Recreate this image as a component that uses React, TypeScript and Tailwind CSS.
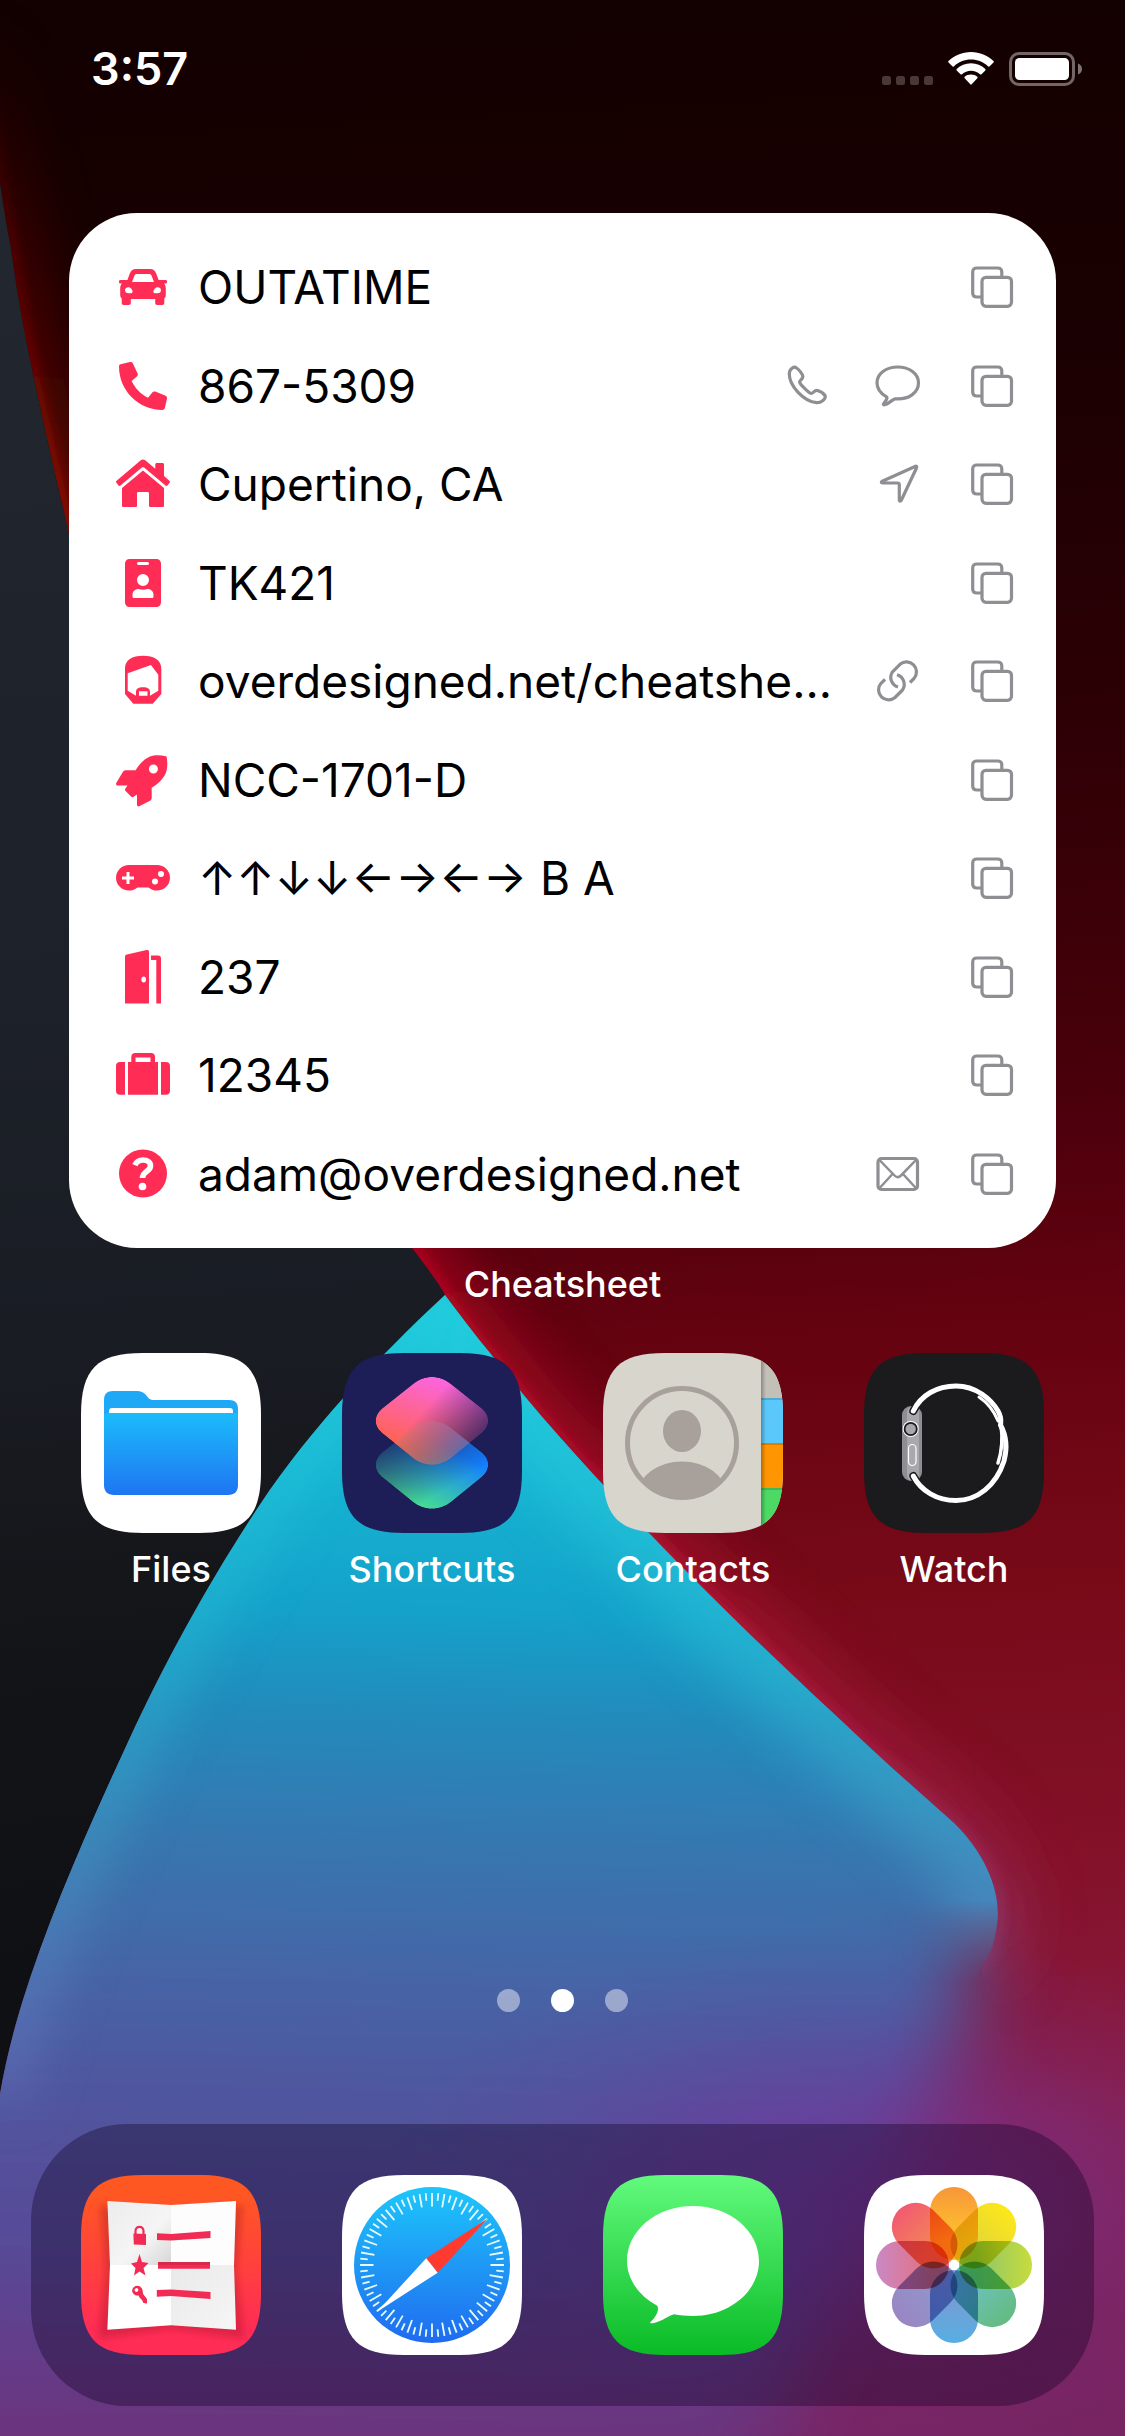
import type { ReactNode } from "react";

/* ---------- Wallpaper ---------- */

const BLUE_LEFT =
  "M445 1295C375 1360 310 1430 261 1503C215 1572 168 1655 129 1740C85 1835 48 1920 22 2003C12 2036 5 2065 0 2094";
const BLUE_RIGHT =
  "C460 1315 475 1335 490 1353C545 1424 600 1482 649 1533C740 1628 830 1710 890 1766L954 1823C990 1858 1003 1900 996 1930C994 1945 990 1955 980 1968";
const RED_EDGE =
  "M-20 20C-10 110 -2 180 11 249C22 330 38 400 69 534C130 770 240 1010 412 1248C425 1265 440 1285 445 1295";

function Wallpaper() {
  return (
    <svg
      className="absolute inset-0 h-full w-full"
      viewBox="0 0 1125 2436"
      preserveAspectRatio="xMidYMid slice"
      aria-hidden="true"
    >
      <defs>
        <linearGradient id="wRed" gradientUnits="userSpaceOnUse" x1="500" y1="0" x2="640" y2="2436">
          <stop offset="0" stopColor="#130000" />
          <stop offset="0.15" stopColor="#1a0002" />
          <stop offset="0.3" stopColor="#2c0005" />
          <stop offset="0.46" stopColor="#4a000b" />
          <stop offset="0.55" stopColor="#640210" />
          <stop offset="0.66" stopColor="#780a18" />
          <stop offset="0.78" stopColor="#84122a" />
          <stop offset="0.88" stopColor="#8a1c48" />
          <stop offset="1" stopColor="#7c2058" />
        </linearGradient>
        <linearGradient id="wDark" gradientUnits="userSpaceOnUse" x1="0" y1="300" x2="120" y2="2000">
          <stop offset="0" stopColor="#21262f" />
          <stop offset="0.4" stopColor="#1d2129" />
          <stop offset="0.62" stopColor="#191c23" />
          <stop offset="0.8" stopColor="#131417" />
          <stop offset="1" stopColor="#0f1013" />
        </linearGradient>
        <linearGradient id="wBlue" gradientUnits="userSpaceOnUse" x1="500" y1="1290" x2="470" y2="2436">
          <stop offset="0" stopColor="#20c6d8" />
          <stop offset="0.16" stopColor="#16b4d2" />
          <stop offset="0.28" stopColor="#14a2ca" />
          <stop offset="0.37" stopColor="#228bbc" />
          <stop offset="0.48" stopColor="#3677b0" />
          <stop offset="0.58" stopColor="#4468a8" />
          <stop offset="0.68" stopColor="#4d59a0" />
          <stop offset="0.78" stopColor="#554f9a" />
          <stop offset="0.9" stopColor="#5a4694" />
          <stop offset="1" stopColor="#63408c" />
        </linearGradient>
        <radialGradient id="wPurple">
          <stop offset="0" stopColor="#753499" stopOpacity="0.8" />
          <stop offset="0.35" stopColor="#73359a" stopOpacity="0.55" />
          <stop offset="0.7" stopColor="#6f379a" stopOpacity="0.18" />
          <stop offset="1" stopColor="#6b3a98" stopOpacity="0" />
        </radialGradient>
        <linearGradient id="wFadeY" gradientUnits="userSpaceOnUse" x1="0" y1="1900" x2="0" y2="1985">
          <stop offset="0" stopColor="#fff" />
          <stop offset="1" stopColor="#000" />
        </linearGradient>
        <linearGradient id="wEdge" gradientUnits="userSpaceOnUse" x1="0" y1="1300" x2="0" y2="2050">
          <stop offset="0" stopColor="#24d6e2" />
          <stop offset="0.5" stopColor="#2fc0d6" />
          <stop offset="0.75" stopColor="#48a4cc" />
          <stop offset="1" stopColor="#6a80c8" />
        </linearGradient>
        <linearGradient id="wGlow" gradientUnits="userSpaceOnUse" x1="0" y1="20" x2="0" y2="1960">
          <stop offset="0" stopColor="#5a0000" stopOpacity="0" />
          <stop offset="0.12" stopColor="#7a0400" stopOpacity="0.7" />
          <stop offset="0.25" stopColor="#a80c00" />
          <stop offset="0.6" stopColor="#c80020" />
          <stop offset="0.8" stopColor="#b81838" />
          <stop offset="1" stopColor="#a02858" />
        </linearGradient>
        <linearGradient id="wBottom" gradientUnits="userSpaceOnUse" x1="0" y1="2250" x2="0" y2="2436">
          <stop offset="0" stopColor="#702a7c" stopOpacity="0" />
          <stop offset="1" stopColor="#74286c" stopOpacity="0.5" />
        </linearGradient>
        <filter id="wB6" filterUnits="userSpaceOnUse" x="-200" y="-200" width="1525" height="2836">
          <feGaussianBlur stdDeviation="6" />
        </filter>
        <filter id="wB28" filterUnits="userSpaceOnUse" x="-200" y="-200" width="1525" height="2836">
          <feGaussianBlur stdDeviation="28" />
        </filter>
        <filter id="wB40" filterUnits="userSpaceOnUse" x="-400" y="1200" width="1725" height="1636">
          <feGaussianBlur stdDeviation="40" />
        </filter>
        <clipPath id="wRightOfLeft">
          <path d={BLUE_LEFT + "V2436H1125V1295Z"} />
        </clipPath>
        <clipPath id="wBlueClip">
          <path d={"M0 2094C5 2065 12 2036 22 2003C48 1920 85 1835 129 1740C168 1655 215 1572 261 1503C310 1430 375 1360 445 1295" + BLUE_RIGHT + "L900 2436H0Z"} />
        </clipPath>
        <clipPath id="wRedClip">
          <path d={RED_EDGE + BLUE_RIGHT + "L1125 2436V0H-20Z"} />
        </clipPath>
        <mask id="wSharp" maskUnits="userSpaceOnUse" x="0" y="1200" width="1125" height="1236">
          <rect y="1200" width="1125" height="1236" fill="url(#wFadeY)" />
        </mask>
      </defs>

      <rect width="1125" height="2436" fill="url(#wRed)" />
      <g clipPath="url(#wRedClip)">
        <path d={RED_EDGE + BLUE_RIGHT} fill="none" stroke="url(#wGlow)" strokeWidth="60" opacity="0.6" filter="url(#wB28)" />
        <path d={RED_EDGE + BLUE_RIGHT} fill="none" stroke="url(#wGlow)" strokeWidth="12" opacity="0.7" filter="url(#wB6)" />
      </g>
      <path d={RED_EDGE + "C375 1360 310 1430 261 1503C215 1572 168 1655 129 1740C85 1835 48 1920 22 2003C12 2036 5 2065 0 2094H-30V20Z"} fill="url(#wDark)" />

      <g clipPath="url(#wRightOfLeft)">
        <path
          d="M-200 1720H680L850 1830L950 1890C990 1960 975 2030 920 2120C860 2220 790 2330 740 2600H-200Z"
          fill="url(#wBlue)"
          filter="url(#wB40)"
        />
      </g>
      <g mask="url(#wSharp)">
        <g clipPath="url(#wBlueClip)">
          <rect y="1200" width="1125" height="1236" fill="url(#wBlue)" />
          <path d={"M445 1295" + BLUE_RIGHT} fill="none" stroke="url(#wEdge)" strokeWidth="90" opacity="0.55" filter="url(#wB28)" />
        </g>
      </g>
      <g clipPath="url(#wBlueClip)">
        <path d={BLUE_LEFT} fill="none" stroke="url(#wEdge)" strokeWidth="46" opacity="0.55" filter="url(#wB28)" />
      </g>
      <ellipse cx="860" cy="2200" rx="480" ry="270" fill="url(#wPurple)" />
      <rect y="2250" width="1125" height="186" fill="url(#wBottom)" />
    </svg>
  );
}

/* ---------- Row glyphs (54 × 54) ---------- */

const glyphs: Record<string, ReactNode> = {
  car: (
    <path
      fillRule="evenodd"
      d="M20 9H34C37.5 9 39.2 11 40.2 13.6L42.6 20H49.5C50.5 20 51 20.6 51 21.5V22C51 23 50.3 23.6 49.5 23.6H48C49.3 25 49.8 26.5 49.8 28.5V35C49.8 36.4 49.3 37.6 48.3 38.4V43C48.3 44.2 47.5 45 46.3 45H41.2C40 45 39.2 44.2 39.2 43V39H14.8V43C14.8 44.2 14 45 12.8 45H7.7C6.5 45 5.7 44.2 5.7 43V38.4C4.7 37.6 4.2 36.4 4.2 35V28.5C4.2 26.5 4.7 25 6 23.6H4.5C3.7 23.6 3 23 3 22V21.5C3 20.6 3.5 20 4.5 20H11.4L13.8 13.6C14.8 11 16.5 9 20 9ZM21 14C19.6 14 18.8 14.6 18.3 15.9L16 22H38L35.7 15.9C35.2 14.6 34.4 14 33 14ZM12.5 27.3C10.4 27.3 9 28.5 9 30.3C9 32.1 10.4 33.3 12.5 33.3C14.6 33.3 16.6 33.6 16.6 31.8C16.6 30 14.6 27.3 12.5 27.3ZM41.5 27.3C39.4 27.3 37.4 30 37.4 31.8C37.4 33.6 39.4 33.3 41.5 33.3C43.6 33.3 45 32.1 45 30.3C45 28.5 43.6 27.3 41.5 27.3Z"
    />
  ),
  phone: (
    <path d="M4.6 5.2L14 3C15.2 2.7 16.4 3.3 16.9 4.4L21.6 14.6C22 15.6 21.7 16.8 20.9 17.5L15.6 22C19 29 24.5 35 32 38.8L36.5 33.3C37.2 32.5 38.3 32.2 39.3 32.6L49.6 36.8C50.7 37.3 51.3 38.5 51 39.7L48.8 49C48.5 50.2 47.5 51 46.3 51C22.500 51 3 31.500 3 7.500C3 6.400 3.500 5.500 4.600 5.200Z" />
  ),
  home: (
    <>
      <path d="M24.800 3.300C26.100 2.200 27.900 2.200 29.200 3.300L39.300 11.800V7.500C39.300 6.600 39.900 6 40.800 6H46.500C47.400 6 48 6.600 48 7.500V19.100L53.400 23.700C54.100 24.300 54.200 25.100 53.600 25.800L51.700 28.300C51.100 29 50.200 29.100 49.500 28.500L28.100 10.600C27.400 10.100 26.600 10.100 25.900 10.600L4.500 28.500C3.800 29.100 2.900 29 2.300 28.300L.400 25.800C-.200 25.100-.100 24.300.600 23.700Z" />
      <path d="M27 13.500L48 31V48.500C48 49.500 47.500 50 46.500 50H34.500C33.500 50 33 49.500 33 48.500V36.500C33 35.500 32.500 35 31.500 35H22.500C21.500 35 21 35.500 21 36.500V48.500C21 49.500 20.500 50 19.500 50H7.500C6.500 50 6 49.500 6 48.500V31Z" />
    </>
  ),
  badge: (
    <path
      fillRule="evenodd"
      d="M13.500 3H40.500C43 3 45 5 45 7.500V46.500C45 49 43 51 40.500 51H13.500C11 51 9 49 9 46.500V7.500C9 5 11 3 13.500 3ZM22.500 6C20.500 6 20.500 9 22.500 9H31.500C33.500 9 33.500 6 31.500 6ZM27 18A6 6 0 1 0 27 30A6 6 0 1 0 27 18ZM22.500 33C19 33 16.500 35.500 16.500 39V40.500C16.500 41.500 17.200 42 18.500 42H35.500C36.800 42 37.500 41.500 37.500 40.500V39C37.500 35.500 35 33 31.500 33C29 34 25 34 22.500 33Z"
    />
  ),
  face: (
    <path
      fillRule="evenodd"
      d="M27 1.700C38 1.700 45.300 6 45.300 14.500V40L36.700 49.700H17.300L9 40V14.500C9 6 16 1.700 27 1.700ZM35 11L11.700 19.300V36.700L20 41.700V38C20 35 22 33.300 27 33.300C32 33.300 34 35 34 38V41.700L42.300 36.700V20.700ZM23 37.300V41.700H31.500V37.300Z"
    />
  ),
  rocket: (
    <path
      fillRule="evenodd"
      d="M49.800 3.200C44.500 1.900 38.500 1.800 34 3.500C28 6 23.500 11 19.600 17.300H10C8.500 17.300 7.500 17.800 6.800 19L.400 29.800C-.400 31.200.400 32.500 2 32.500H11.500L9.400 35.500C8.800 36.500 8.900 37.300 9.600 38.100L15 43.500C15.800 44.300 16.700 44.400 17.600 43.700L21 41.500V51.500C21 53.200 22.300 53.800 23.700 53.100L34 47.800C35.200 47.100 35.700 46.200 35.700 44.700V34.800C42 31 47.200 26 49.800 20C51.500 15.500 51.700 9.500 50.700 4.200C50.600 3.600 50.300 3.300 49.800 3.200ZM37.400 11.500A4.500 4.500 0 1 1 37.400 20.500A4.500 4.500 0 1 1 37.400 11.500Z"
    />
  ),
  gamepad: (
    <path
      fillRule="evenodd"
      d="M13 14H41A13 12.800 0 0 1 41 39.600C37.500 39.600 35 38.500 32.500 36.500H21.500C19 38.500 16.500 39.600 13 39.600A13 12.800 0 0 1 13 14ZM10.500 21V25.500H6V28.500H10.500V33H13.500V28.500H18V25.500H13.500V21ZM45 20A3 3 0 1 0 45 26A3 3 0 1 0 45 20ZM39 27.500A3 3 0 1 0 39 33.500A3 3 0 1 0 39 27.500Z"
    />
  ),
  door: (
    <path
      fillRule="evenodd"
      d="M11 4.500L30.500 0C32 -.300 33 .500 33 2V53.500H9V7C9 5.500 9.600 4.800 11 4.500ZM27.700 26.500A2.300 3 0 1 0 27.700 32.500A2.300 3 0 1 0 27.700 26.500ZM35 5.500H42C44 5.500 45 6.500 45 8.500V53.500H40.300V10H35Z"
    />
  ),
  suitcase: (
    <path
      fillRule="evenodd"
      d="M4 14H9V46.700H4C1.500 46.700 0 45.200 0 42.700V18C0 15.500 1.500 14 4 14ZM45 14H50C52.500 14 54 15.500 54 18V42.700C54 45.200 52.500 46.700 50 46.700H45ZM12 14H15.300V9C15.300 6.500 16.800 5 19.300 5H35C37.500 5 39 6.500 39 9V14H42V46.700H12ZM19.500 9.500V14H34.500V9.500Z"
    />
  ),
  question: (
    <>
      <circle cx="27" cy="26.500" r="24" />
      <path d="M18.800 18.200C20.500 14.500 23.200 13 27 13C31.500 13 34.500 15.600 34.500 19C34.500 24.500 26.500 24 26.500 31" fill="none" stroke="#fff" strokeWidth="5.600" />
      <circle cx="26.500" cy="39.500" r="3.800" fill="#fff" />
    </>
  ),
};

function RowGlyph({ name }: { name: string }) {
  return (
    <svg className="size-[54px] shrink-0 fill-[#ff2d55]" viewBox="0 0 54 54" aria-hidden="true">
      {glyphs[name]}
    </svg>
  );
}

/* ---------- Action glyphs (44 × 44) ---------- */

const actionGlyphs: Record<string, ReactNode> = {
  copy: (
    <>
      <path d="M11 32H7C4.200 32 2.700 30.500 2.700 28V7C2.700 4.500 4.200 3 7 3H27.500C30.300 3 31.800 4.500 31.800 7V11" />
      <rect x="12" y="12.300" width="29.500" height="29" rx="4" />
    </>
  ),
  call: (
    <path d="M14.500 4C12 1.800 7.500 5 7.300 9.500C7 22 22 37.500 34.500 38.700C39 39 44.500 35 43 31.500C42 30 38 27.300 35.500 26.500C32.500 25.800 31 29.800 29 29.500C27 29.200 17.800 20.200 17.600 18C17.500 16.500 21 14.800 20.900 12.500C20.500 10 17 5.500 14.500 4Z" />
  ),
  message: (
    <path d="M21.700 3C10 3 1 9.800 1 18.800C1 25 5 29.800 10.500 32.800C12 33.800 9.500 37.500 7.500 40C7 41 8 41 9.500 40.500C14 38.800 17 35 19 34.800C33 36 42.500 28.500 42.500 18.800C42.500 9.800 33.500 3 21.700 3Z" />
  ),
  navigate: <path d="M39 4.500L6.300 19.200C5 20 5 21 6.500 21H21.500C22.800 21 23.300 21.500 23.300 22.800V38C23.300 39.500 24.600 39.500 25.300 38.200L40.500 6C41.200 4.500 40.500 3.800 39 4.500Z" />,
  link: (
    <>
      <path d="M34 23.500L38 19.500A10 10 0 0 0 24 5.300L16.500 12.800A10 10 0 0 0 22 28" />
      <path d="M34 23.500L38 19.500A10 10 0 0 0 24 5.300L16.500 12.800A10 10 0 0 0 22 28" transform="rotate(180 21.500 21.900)" />
    </>
  ),
  mail: (
    <>
      <rect x="2" y="6.500" width="39.500" height="31" rx="3.500" />
      <path d="M3 7.500L18.500 23.500C20.500 25.500 23 25.500 25 23.500L40.500 7.500M3.200 36.500L16.500 22M40.300 36.500L27 22" strokeWidth="2.500" />
    </>
  ),
};

function ActionGlyph({ name }: { name: string }) {
  return (
    <svg
      className="size-[44px] overflow-visible fill-none stroke-[#8e8e93]"
      viewBox="0 0 44 44"
      strokeWidth="3.200"
      strokeLinejoin="round"
      aria-hidden="true"
    >
      {actionGlyphs[name]}
    </svg>
  );
}

/* ---------- Cheatsheet widget ---------- */

type Row = { icon: string; text: string; links?: { glyph: string; label: string; href: string }[] };

const rows: Row[] = [
  { icon: "car", text: "OUTATIME" },
  {
    icon: "phone",
    text: "867-5309",
    links: [
      { glyph: "call", label: "Call 867-5309", href: "tel:8675309" },
      { glyph: "message", label: "Message 867-5309", href: "sms:8675309" },
    ],
  },
  { icon: "home", text: "Cupertino, CA", links: [{ glyph: "navigate", label: "Open in Maps", href: "#maps" }] },
  { icon: "badge", text: "TK421" },
  {
    icon: "face",
    text: "overdesigned.net/cheatshe...",
    links: [{ glyph: "link", label: "Open link", href: "#link" }],
  },
  { icon: "rocket", text: "NCC-1701-D" },
  { icon: "gamepad", text: "↑↑↓↓←→←→ B A" },
  { icon: "door", text: "237" },
  { icon: "suitcase", text: "12345" },
  {
    icon: "question",
    text: "adam@overdesigned.net",
    links: [{ glyph: "mail", label: "Send mail", href: "mailto:adam@overdesigned.net" }],
  },
];

function Widget() {
  return (
    <section aria-label="Cheatsheet" className="mx-[69px] mt-[75px]">
      <ul className="grid min-h-[1035px] auto-rows-fr grid-cols-1 rounded-[68px] bg-white py-[25px] pr-[42px] pl-[47px]">
        {rows.map((row) => (
          <li key={row.text} className="flex min-w-0 items-center gap-7">
            <RowGlyph name={row.icon} />
            <span className="min-w-0 flex-1 truncate text-[46px] leading-[60px] text-black">{row.text}</span>
            <div className="flex shrink-0 items-center gap-[50px]">
              {row.links?.map((l) => (
                <a key={l.glyph} href={l.href} aria-label={l.label}>
                  <ActionGlyph name={l.glyph} />
                </a>
              ))}
              <button type="button" aria-label={`Copy ${row.text}`}>
                <ActionGlyph name="copy" />
              </button>
            </div>
          </li>
        ))}
      </ul>
      <p className="mt-[14px] text-center text-[36px] leading-[44px] font-medium text-white">Cheatsheet</p>
    </section>
  );
}

/* ---------- App icons (180 × 180) ---------- */

const SQUIRCLE =
  "M0 62C0 16 16 0 62 0H118C164 0 180 16 180 62V118C180 164 164 180 118 180H62C16 180 0 164 0 118Z";

function IconBase({ id, children }: { id: string; children: ReactNode }) {
  return (
    <svg className="size-[180px]" viewBox="0 0 180 180" aria-hidden="true">
      <defs>
        <clipPath id={`${id}-clip`}>
          <path d={SQUIRCLE} />
        </clipPath>
      </defs>
      <g clipPath={`url(#${id}-clip)`}>{children}</g>
    </svg>
  );
}

function FilesIcon() {
  return (
    <IconBase id="files">
      <defs>
        <linearGradient id="fFront" x1="0" y1="0" x2="0" y2="1">
          <stop offset="0" stopColor="#1bbcfb" />
          <stop offset="1" stopColor="#1f75f2" />
        </linearGradient>
      </defs>
      <rect width="180" height="180" fill="#fff" />
      <path d="M23 47C23 41 26 38 32 38H56C60 38 62 39 65 42L67 44.500C69 46.500 70 47 74 47H148C154 47 157 50 157 56V70H23Z" fill="#1fa8f6" />
      <path d="M28 60V58.500C28 56 29 55 31.500 55H148.500C151 55 152 56 152 58.500V60Z" fill="#fff" />
      <path d="M23 63C23 61 24 60 26 60H154C156 60 157 61 157 63V132C157 138.500 153.500 142 147 142H33C26.500 142 23 138.500 23 132Z" fill="url(#fFront)" />
    </IconBase>
  );
}

const DIAMOND = "M71 31C82 21.500 98 21.500 109 31L138 54C149 62 149 73.500 138 81.500L109 105C98 114 82 114 71 105L42 81.500C31 73.500 31 62 42 54Z";

function ShortcutsIcon() {
  return (
    <IconBase id="shortcuts">
      <defs>
        <linearGradient id="sTop" x1="0.600" y1="0" x2="0.250" y2="0.800">
          <stop offset="0" stopColor="#fb65e4" />
          <stop offset="1" stopColor="#ff6350" />
        </linearGradient>
        <linearGradient id="sTopFade" x1="0.450" y1="0.350" x2="0.950" y2="0.700">
          <stop offset="0" stopColor="#fff" />
          <stop offset="1" stopColor="#fff" stopOpacity="0.200" />
        </linearGradient>
        <linearGradient id="sBot" x1="0.400" y1="1" x2="0.800" y2="0.400">
          <stop offset="0" stopColor="#47e08f" />
          <stop offset="1" stopColor="#1480ff" />
        </linearGradient>
        <linearGradient id="sBotFade" x1="0.150" y1="0.200" x2="0.600" y2="0.800">
          <stop offset="0" stopColor="#fff" stopOpacity="0.200" />
          <stop offset="1" stopColor="#fff" />
        </linearGradient>
        <mask id="sMaskTop" maskContentUnits="userSpaceOnUse">
          <path d={DIAMOND} fill="url(#sTopFade)" />
        </mask>
        <mask id="sMaskBot" maskContentUnits="userSpaceOnUse">
          <path d={DIAMOND} fill="url(#sBotFade)" />
        </mask>
        <clipPath id="sClipTop">
          <path d={DIAMOND} />
        </clipPath>
      </defs>
      <rect width="180" height="180" fill="#1d1d57" />
      <g transform="translate(0 44)">
        <path d={DIAMOND} fill="url(#sBot)" mask="url(#sMaskBot)" />
      </g>
      <path d={DIAMOND} fill="url(#sTop)" mask="url(#sMaskTop)" />
      <g clipPath="url(#sClipTop)">
        <path d={DIAMOND} transform="translate(0 44)" fill="#a08a80" opacity="0.200" />
      </g>
    </IconBase>
  );
}

function ContactsIcon() {
  return (
    <IconBase id="contacts">
      <defs>
        <clipPath id="cRing">
          <circle cx="79" cy="90" r="55" />
        </clipPath>
        <linearGradient id="cShade" x1="0" y1="0" x2="1" y2="0">
          <stop offset="0" stopColor="#000" stopOpacity="0.280" />
          <stop offset="1" stopColor="#000" stopOpacity="0" />
        </linearGradient>
      </defs>
      <rect width="180" height="180" fill="#d8d5cc" />
      <rect x="158" width="22" height="45" fill="#c3c0b8" />
      <rect x="158" y="45" width="22" height="45" fill="#5ac8fa" />
      <rect x="158" y="90" width="22" height="45" fill="#ff9500" />
      <rect x="158" y="135" width="22" height="45" fill="#4cd964" />
      <rect x="158" width="5" height="180" fill="url(#cShade)" />
      <path d="M158 46H180M158 91H180M158 136H180" stroke="#000" strokeOpacity="0.150" strokeWidth="2" />
      <g fill="#a8a19b">
        <ellipse cx="79" cy="78" rx="19" ry="21" />
        <ellipse cx="79" cy="141" rx="44" ry="32.500" clipPath="url(#cRing)" />
      </g>
      <circle cx="79" cy="90" r="54.500" fill="none" stroke="#a8a19b" strokeWidth="5" />
    </IconBase>
  );
}

function WatchIcon() {
  return (
    <IconBase id="watch">
      <rect width="180" height="180" fill="#1b1b1d" />
      <rect x="138" y="99" width="7" height="8" rx="3" fill="#a9a9ad" />
      <rect x="38" y="53" width="20" height="75" rx="9" fill="#8e8e93" />
      <rect x="43" y="53" width="12" height="75" rx="6" fill="#a9a9ad" />
      <g fill="none" strokeLinecap="round">
        <path d="M49.300 58C57 42 73 33 92 33C112 33 127 46 134 58C138 65 137 68 137 73C144 84 144 95 140 108C132 133 113 147.500 92 147.500C73 147.500 57 138 49.300 123" stroke="#1b1b1d" strokeWidth="8" />
        <path d="M49.300 58C57 42 73 33 92 33C112 33 127 46 134 58C138 65 137 68 136.500 72C143 84 143.500 95 140 108C132 133 113 147.500 92 147.500C73 147.500 57 138 49.300 123" stroke="#fff" strokeWidth="5" />
        <path d="M115 44C124 50 130 58 134 68" stroke="#fff" strokeWidth="3" />
        <path d="M137 72C139 86 138 98 134 110" stroke="#fff" strokeWidth="3.500" />
      </g>
      <circle cx="46.700" cy="76" r="8" fill="#fff" />
      <circle cx="46.700" cy="76" r="7" fill="#1b1b1d" />
      <circle cx="46.700" cy="76" r="5.200" fill="#a9a9ad" />
      <rect x="44.500" y="91.500" width="7.500" height="21" rx="3.700" fill="none" stroke="#fff" strokeWidth="1.200" />
    </IconBase>
  );
}

function CheatsheetIcon() {
  return (
    <IconBase id="cheat">
      <defs>
        <linearGradient id="chBg" x1="0" y1="0" x2="0" y2="1">
          <stop offset="0.100" stopColor="#ff5722" />
          <stop offset="0.850" stopColor="#ff2d55" />
        </linearGradient>
        <linearGradient id="chTl" x1="0" y1="0" x2="1" y2="1">
          <stop offset="0" stopColor="#ececec" />
          <stop offset="0.600" stopColor="#f5f5f5" />
          <stop offset="1" stopColor="#d6d6d6" />
        </linearGradient>
        <linearGradient id="chBr" x1="0" y1="0" x2="1" y2="1">
          <stop offset="0" stopColor="#e9e9e9" />
          <stop offset="1" stopColor="#f6f6f6" />
        </linearGradient>
        <filter id="chBlur">
          <feGaussianBlur stdDeviation="3" />
        </filter>
      </defs>
      <rect width="180" height="180" fill="url(#chBg)" />
      <path d="M19 30L90 38L162 30L156 96L164 164L90 154L17 164L24 96Z" fill="#8c1020" opacity="0.280" filter="url(#chBlur)" />
      <path d="M26.400 26L90 30V90H29Z" fill="url(#chTl)" />
      <path d="M155 26L90 30V90H153Z" fill="#fdfdfd" />
      <path d="M26.400 154.700L90 150.300V90H29Z" fill="#fff" />
      <path d="M155 154.700L90 150.300V90H153Z" fill="url(#chBr)" />
      <g fill="#f22b54">
        <path d="M76 58.300L90 59L129.500 56V63L90 65.500L76 65Z" />
        <path d="M77 87H129V93.700H77Z" />
        <path d="M75.800 115L90 114.500L129.500 117V124L90 121L75.800 121.700Z" />
        <path d="M52.400 58.500L65 59V70L52.800 69.500Z" />
        <path d="M54.500 59V56C54.500 50.500 62.500 50.500 62.500 56V59" fill="none" stroke="#f22b54" strokeWidth="2.200" />
        <path d="M58.500 79L61 87L67.500 88L62.500 93L64.500 100.500L58.500 96.500L53 100.500L54.500 93L50 88.500L56 87Z" />
        <path fillRule="evenodd" d="M53 112C56 109.500 60.500 111 61.500 115C62 117 61.800 118.500 62.500 119.500L66 124V128.500L62.500 128L61 125L58.500 122.500L57.500 120.500C54 121 51 118.500 51.200 115.500C51.300 114 52 112.700 53 112ZM54.500 113.500A1.800 1.800 0 1 0 56.500 116.500A1.800 1.800 0 1 0 54.500 113.500Z" />
      </g>
      <path d="M77 90H129V87H77Z" fill="#000" opacity="0.100" />
    </IconBase>
  );
}

const ticks = Array.from({ length: 72 }, (_, i) => i);

function SafariIcon() {
  return (
    <IconBase id="safari">
      <defs>
        <linearGradient id="sfDial" x1="0" y1="0" x2="0" y2="1">
          <stop offset="0" stopColor="#1dc6fb" />
          <stop offset="1" stopColor="#206bef" />
        </linearGradient>
      </defs>
      <rect width="180" height="180" fill="#fff" />
      <circle cx="90" cy="90" r="78" fill="url(#sfDial)" />
      <g stroke="#e6fbff" strokeWidth="1.800">
        {ticks.map((i) => (
          <path key={i} d={i % 2 === 0 ? "M90 18V31.500" : "M90 18V25.500"} transform={`rotate(${i * 5} 90 90)`} />
        ))}
      </g>
      <path d="M146 43.300L84.200 83.300L95.700 97.700Z" fill="#ff3b30" />
      <path d="M35.200 136.700L84.200 83.300L95.700 97.700Z" fill="#fff" />
    </IconBase>
  );
}

function MessagesIcon() {
  return (
    <IconBase id="messages">
      <defs>
        <linearGradient id="mBg" x1="0" y1="0" x2="0" y2="1">
          <stop offset="0" stopColor="#62fa7d" />
          <stop offset="1" stopColor="#0abb25" />
        </linearGradient>
      </defs>
      <rect width="180" height="180" fill="url(#mBg)" />
      <path
        d="M90 31C53.500 31 24 55.500 24 86C24 104 36 121 54 130.500C57 134 53 142 47.500 147C46.500 148.500 48 148.500 50 148.200C60 146 66 140.500 71 139.300C77 140.500 83 141 90 141C126.500 141 156 116.500 156 86C156 55.500 126.500 31 90 31Z"
        fill="#fff"
      />
    </IconBase>
  );
}

const petals = [
  ["#f7963a", "#ffc62c"],
  ["#fce81a", "#e2d33a"],
  ["#c8dc3c", "#8dc66a"],
  ["#64bb80", "#6cc3c0"],
  ["#56aee2", "#7e9ad2"],
  ["#9a86c4", "#8f96ca"],
  ["#ca88c6", "#e4707c"],
  ["#f25a70", "#f28a56"],
];

function PhotosIcon() {
  return (
    <IconBase id="photos">
      <defs>
        {petals.map(([outer, inner], i) => (
          <linearGradient key={outer} id={`petal${i}`} x1="0" y1="0" x2="0" y2="1">
            <stop offset="0" stopColor={outer} />
            <stop offset="0.750" stopColor={inner} />
          </linearGradient>
        ))}
      </defs>
      <g className="isolate">
        <rect width="180" height="180" fill="#fff" />
        {petals.map(([outer], i) => (
          <rect
            key={outer}
            className="mix-blend-multiply"
            x="66"
            y="12"
            width="48"
            height="73"
            rx="24"
            fill={`url(#petal${i})`}
            transform={`rotate(${i * 45} 90 90)`}
          />
        ))}
      </g>
    </IconBase>
  );
}

function AppLink({ name, label, children }: { name: string; label?: boolean; children: ReactNode }) {
  return (
    <a href={`#${name.toLowerCase()}`} aria-label={name} className="flex w-[180px] flex-col items-center">
      {children}
      {label && (
        <span className="mt-[14px] text-[36px] leading-[44px] font-medium whitespace-nowrap text-white">{name}</span>
      )}
    </a>
  );
}

/* ---------- Status bar ---------- */

function StatusBar() {
  return (
    <header className="flex h-[138px] items-center justify-between pr-[43px] pl-[91px] text-white">
      <time className="text-[45px] leading-[52px] font-semibold">3:57</time>
      <svg className="h-[34px] w-[200px]" viewBox="882 52 200 34" role="img" aria-label="No signal, Wi-Fi connected, battery full">
        <g fill="#fff">
          <g opacity="0.220">
            <rect x="882" y="76" width="9" height="9" rx="2.500" />
            <rect x="896" y="76" width="9" height="9" rx="2.500" />
            <rect x="910" y="76" width="9" height="9" rx="2.500" />
            <rect x="924" y="76" width="9" height="9" rx="2.500" />
          </g>
          <path d="M971 52C962 52 954.500 55.500 948.500 61C948 61.500 948 62 948.500 62.500L952.300 66.300C952.800 66.800 953.300 66.800 953.800 66.400C958.500 62 964.500 59.500 971 59.500C977.500 59.500 983.500 62 988.200 66.400C988.700 66.800 989.200 66.800 989.700 66.300L993.500 62.500C994 62 994 61.500 993.500 61C987.500 55.500 980 52 971 52Z" />
          <path d="M971 63.300C965.500 63.300 960.500 65.400 956.700 69C956.300 69.500 956.300 70 956.700 70.500L960.500 74.200C961 74.700 961.500 74.700 962 74.300C964.500 72 967.500 70.800 971 70.800C974.500 70.800 977.500 72 980 74.300C980.500 74.700 981 74.700 981.500 74.200L985.300 70.500C985.700 70 985.700 69.500 985.300 69C981.500 65.400 976.500 63.300 971 63.300Z" />
          <path d="M971 74.500C968.500 74.500 966.300 75.400 964.700 76.800C964.200 77.300 964.200 77.800 964.700 78.300L970.300 84.300C970.800 84.800 971.200 84.800 971.700 84.300L977.300 78.300C977.800 77.800 977.800 77.300 977.300 76.800C975.700 75.400 973.500 74.500 971 74.500Z" />
          <rect x="1010.500" y="53.500" width="63" height="31" rx="8.500" fill="none" stroke="#fff" strokeWidth="3" opacity="0.400" />
          <rect x="1015" y="58" width="54" height="22" rx="4.500" />
          <path d="M1078 63.500C1080.800 64.500 1082 66.500 1082 69C1082 71.500 1080.800 73.500 1078 74.500Z" opacity="0.450" />
        </g>
      </svg>
    </header>
  );
}

/* ---------- Home screen ---------- */

export default function App() {
  return (
    <main className="relative isolate flex min-h-screen flex-col overflow-hidden bg-[#130000] font-['Inter',sans-serif]">
      <div className="absolute inset-0 -z-10">
        <Wallpaper />
      </div>
      <StatusBar />
      <Widget />
      <nav aria-label="Apps" className="mt-[47px] flex justify-between px-[81px]">
        <AppLink name="Files" label><FilesIcon /></AppLink>
        <AppLink name="Shortcuts" label><ShortcutsIcon /></AppLink>
        <AppLink name="Contacts" label><ContactsIcon /></AppLink>
        <AppLink name="Watch" label><WatchIcon /></AppLink>
      </nav>
      <div className="mt-auto flex justify-center gap-[31px] pt-8">
        <button type="button" aria-label="Page 1" className="size-[23px] rounded-full bg-white/45" />
        <button type="button" aria-label="Page 2" aria-current="page" className="size-[23px] rounded-full bg-white" />
        <button type="button" aria-label="Page 3" className="size-[23px] rounded-full bg-white/45" />
      </div>
      <nav
        aria-label="Dock"
        className="mx-[31px] mt-[112px] mb-[30px] flex justify-between rounded-[96px] bg-[#0c001c]/35 px-[50px] py-[51px]"
      >
        <AppLink name="Cheatsheet"><CheatsheetIcon /></AppLink>
        <AppLink name="Safari"><SafariIcon /></AppLink>
        <AppLink name="Messages"><MessagesIcon /></AppLink>
        <AppLink name="Photos"><PhotosIcon /></AppLink>
      </nav>
    </main>
  );
}
